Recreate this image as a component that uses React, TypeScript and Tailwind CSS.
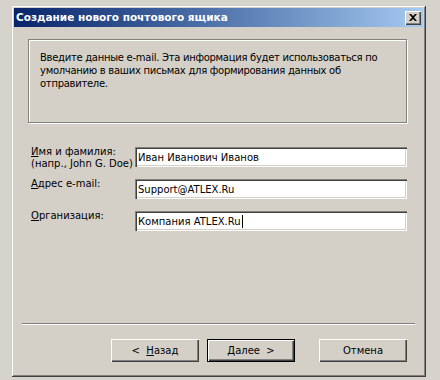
import React from 'react';

const font = { fontFamily: '"DejaVu Sans", Tahoma, sans-serif' };

function Field({
  label,
  value,
  caret,
}: {
  label: React.ReactNode;
  value: string;
  caret?: boolean;
}) {
  return (
    <div className="flex h-[32px] items-start">
      <div className="w-[104px] pt-px text-[10px] leading-[12px] text-black">{label}</div>
      <div className="mt-[2px] flex h-[20px] w-[272px] items-center bg-white pl-[3px] text-[10px] text-black shadow-[inset_1px_1px_#808080,inset_2px_2px_#404040,inset_-1px_-1px_#ffffff,inset_-2px_-2px_#d4d0c8]">
        <span>{value}</span>
        {caret && <span className="ml-px inline-block h-[13px] w-px bg-black" />}
      </div>
    </div>
  );
}

function Button({
  children,
  primary,
}: {
  children: React.ReactNode;
  primary?: boolean;
}) {
  return (
    <div
      className={
        primary
          ? 'flex h-[23px] w-[88px] items-center justify-center border border-black bg-[#d4d0c8] text-[10px] text-black shadow-[inset_1px_1px_#ffffff,inset_-1px_-1px_#404040,inset_-2px_-2px_#808080]'
          : 'flex h-[23px] w-[88px] items-center justify-center bg-[#d4d0c8] text-[10px] text-black shadow-[inset_1px_1px_#ffffff,inset_-1px_-1px_#404040,inset_-2px_-2px_#808080]'
      }
    >
      {children}
    </div>
  );
}

export default function App() {
  return (
    <div className="h-[380px] w-[440px] overflow-hidden bg-[#d6d3cd] pt-[5px] pl-[11px]" style={font}>
      <div className="flex h-[372px] w-[415px] flex-col bg-[#d4d0c8] p-[3px] shadow-[inset_1px_1px_#d4d0c8,inset_-1px_-1px_#404040,inset_2px_2px_#ffffff,inset_-2px_-2px_#808080]">
        {/* title bar */}
        <div className="flex h-[19px] items-center justify-between bg-gradient-to-r from-[#0a246a] to-[#a6caf0] pr-[2px] pl-[2px]">
          <span className="text-[10.5px] font-bold text-white">Создание нового почтового ящика</span>
          <div className="flex h-[14px] w-[16px] items-center justify-center bg-[#d4d0c8] shadow-[inset_1px_1px_#ffffff,inset_-1px_-1px_#404040,inset_-2px_-2px_#808080]">
            <svg width="8" height="7" viewBox="0 0 8 7">
              <path d="M0 0h2l2 2 2-2h2L5 3.5 8 7H6L4 5 2 7H0l3-3.5z" fill="#000" />
            </svg>
          </div>
        </div>

        {/* info box */}
        <div className="mt-[12px] ml-[14px] h-[84px] w-[379px] border border-[#808080] pt-[11px] pl-[11px] text-[10px] leading-[13px] tracking-[-0.28px] text-black shadow-[inset_1px_1px_#ffffff,1px_1px_#ffffff]">
          Введите данные e-mail. Эта информация будет использоваться по
          <br />
          умолчанию в ваших письмах для формирования данных об
          <br />
          отправителе.
        </div>

        {/* form */}
        <div className="mt-[22px] ml-[17px] flex flex-col">
          <Field
            label={
              <>
                <span className="underline">И</span>мя и фамилия:
                <br />
                (напр., John G. Doe)
              </>
            }
            value="Иван Иванович Иванов"
          />
          <Field
            label={
              <>
                <span className="underline">А</span>дрес e-mail:
              </>
            }
            value="Support@ATLEX.Ru"
          />
          <Field
            label={
              <>
                <span className="underline">О</span>рганизация:
              </>
            }
            value="Компания ATLEX.Ru"
            caret
          />
        </div>

        {/* separator */}
        <div className="mx-[8px] mt-[82px] h-[2px] border-t border-b border-t-[#808080] border-b-white" />

        {/* buttons */}
        <div className="mt-[14px] flex justify-end pr-[16px]">
          <Button>
            &lt;&nbsp;&nbsp;<span className="underline">Н</span>азад
          </Button>
          <div className="w-[8px]" />
          <Button primary>
            <span className="underline">Д</span>алее&nbsp;&nbsp;&gt;
          </Button>
          <div className="w-[24px]" />
          <Button>Отмена</Button>
        </div>
      </div>
    </div>
  );
}
